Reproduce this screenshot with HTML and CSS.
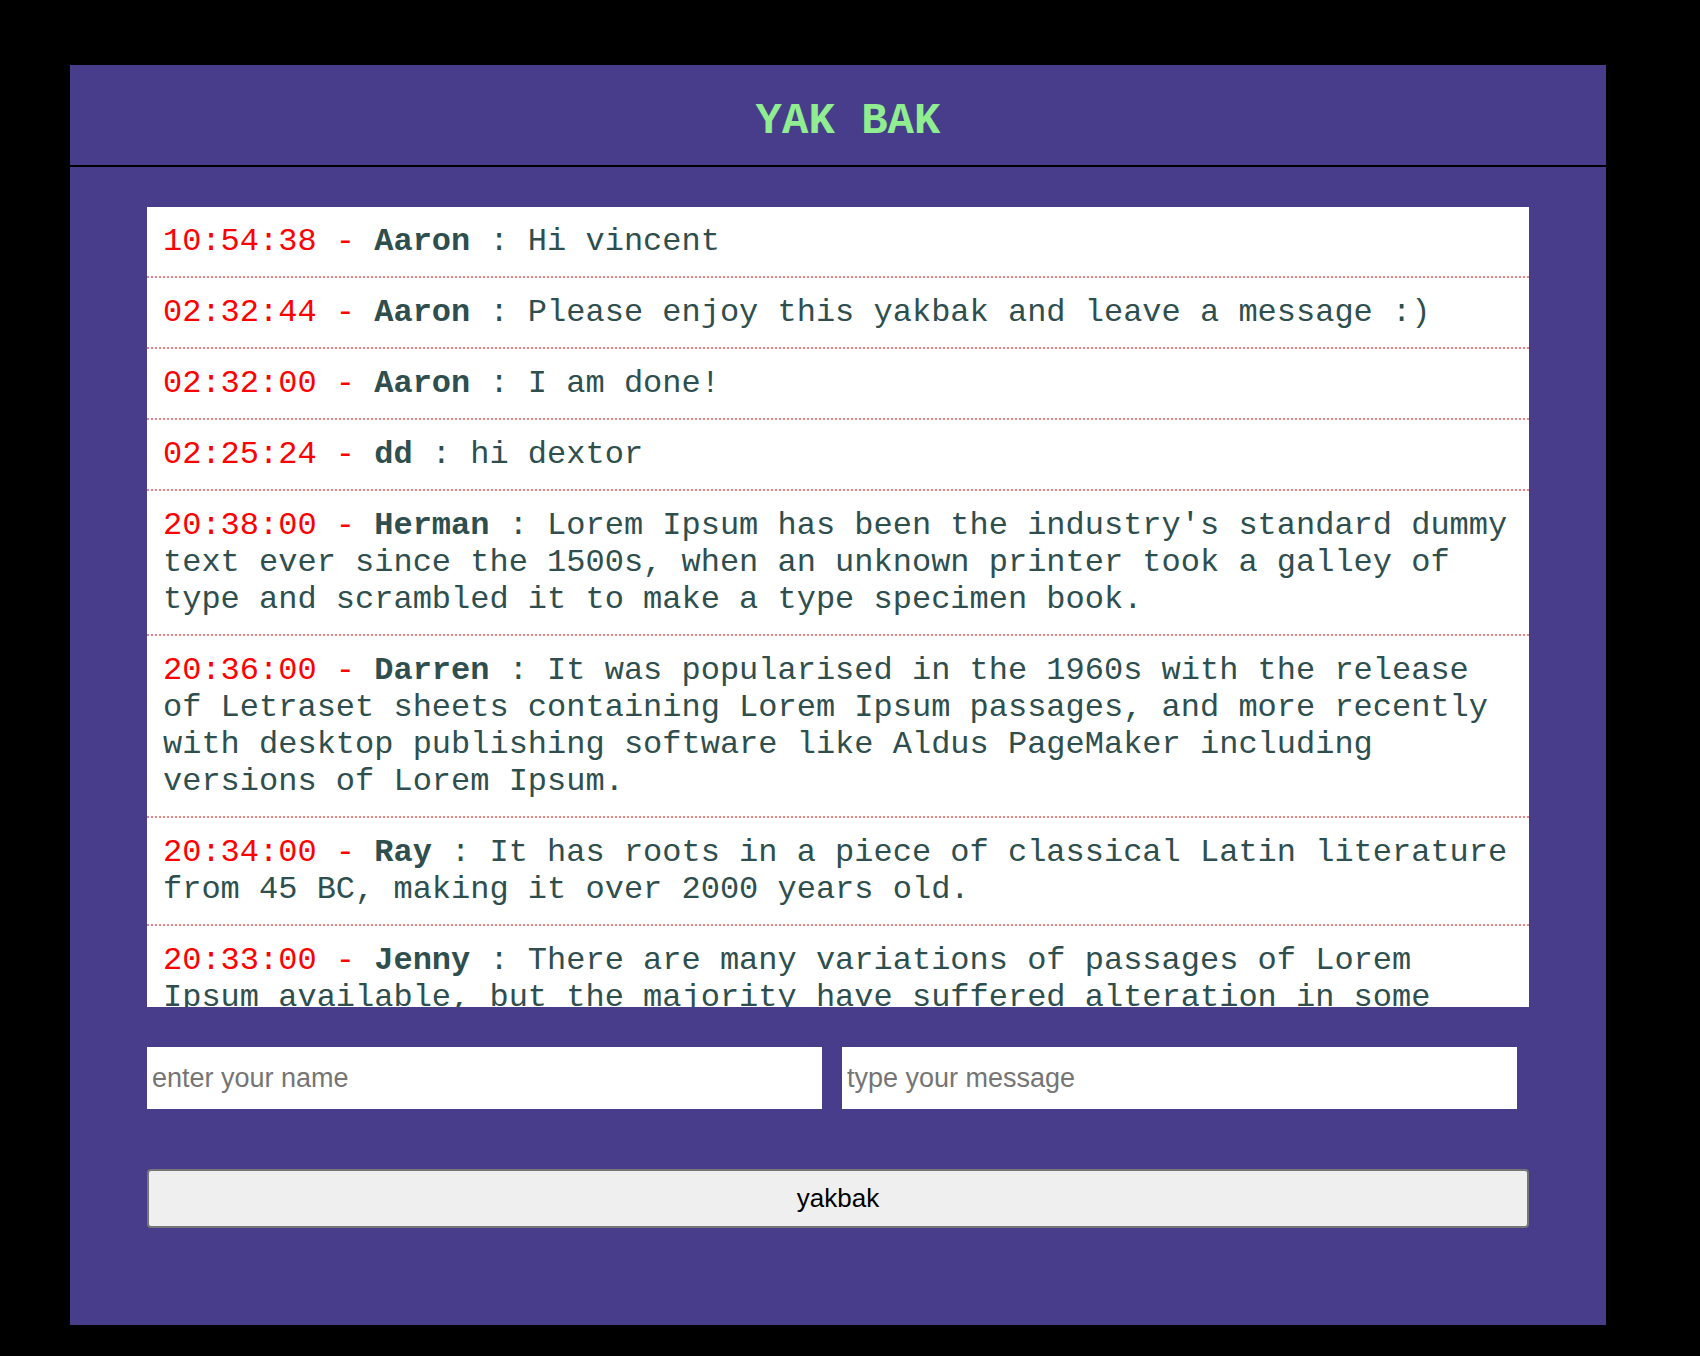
FILE: index.html
```html
<!DOCTYPE html>
<html lang="en">
<head>
<meta charset="utf-8">
<title>Yak Bak</title>
<link rel="stylesheet" href="styles.css">
</head>
<body>
<div class="app">
  <header class="header">
    <h1 class="title">YAK BAK</h1>
  </header>
  <main class="main">
    <ul class="messages">
      <li class="msg"><span class="time">10:54:38 - </span><b class="name">Aaron</b> : Hi vincent</li>
      <li class="msg"><span class="time">02:32:44 - </span><b class="name">Aaron</b> : Please enjoy this yakbak and leave a message :)</li>
      <li class="msg"><span class="time">02:32:00 - </span><b class="name">Aaron</b> : I am done!</li>
      <li class="msg"><span class="time">02:25:24 - </span><b class="name">dd</b> : hi dextor</li>
      <li class="msg"><span class="time">20:38:00 - </span><b class="name">Herman</b> : Lorem Ipsum has been the industry's standard dummy text ever since the 1500s, when an unknown printer took a galley of type and scrambled it to make a type specimen book.</li>
      <li class="msg"><span class="time">20:36:00 - </span><b class="name">Darren</b> : It was popularised in the 1960s with the release of Letraset sheets containing Lorem Ipsum passages, and more recently with desktop publishing software like Aldus PageMaker including versions of Lorem Ipsum.</li>
      <li class="msg"><span class="time">20:34:00 - </span><b class="name">Ray</b> : It has roots in a piece of classical Latin literature from 45 BC, making it over 2000 years old.</li>
      <li class="msg"><span class="time">20:33:00 - </span><b class="name">Jenny</b> : There are many variations of passages of Lorem Ipsum available, but the majority have suffered alteration in some form, by injected humour, or randomised words which don't look even slightly believable.</li>
    </ul>
    <form class="composer">
      <div class="fields">
        <input class="field" type="text" placeholder="enter your name">
        <input class="field" type="text" placeholder="type your message">
      </div>
      <button class="send" type="button">yakbak</button>
    </form>
  </main>
</div>
</body>
</html>
```
FILE: styles.css
```css
html, body {
  margin: 0;
  padding: 0;
  background: #000000;
}

body {
  padding: 65px 0 31px 70px;
}

.app {
  width: 1536px;
  height: 1260px;
  background: #483d8b;
  box-sizing: border-box;
}

.header {
  height: 102px;
  box-sizing: border-box;
  border-bottom: 2px solid #000000;
  padding: 12px 0 0 20px;
  display: flex;
  align-items: center;
  justify-content: center;
}

.title {
  margin: 0;
  font-family: "Liberation Mono", "Courier New", monospace;
  font-size: 44px;
  font-weight: bold;
  color: #90ee90;
}

.main {
  padding: 40px 77px 0 77px;
}

.messages {
  list-style: none;
  margin: 0;
  padding: 0;
  height: 800px;
  overflow: hidden;
  background: #ffffff;
}

.msg {
  padding: 16px;
  border-bottom: 2px dotted #f08080;
  font-family: "Liberation Mono", "Courier New", monospace;
  font-size: 32px;
  line-height: 37px;
  color: #2f4f4f;
}

.time {
  color: #ff0000;
}

.name {
  font-weight: bold;
}

.composer {
  margin: 40px 0 0 0;
}

.fields {
  display: flex;
  gap: 20px;
}

.field {
  width: 675px;
  height: 62px;
  box-sizing: border-box;
  border: none;
  outline: none;
  margin: 0;
  padding: 0 5px;
  background: #ffffff;
  font-family: "Liberation Sans", Arial, sans-serif;
  font-size: 27px;
  color: #000000;
}

.field::placeholder {
  color: #757575;
}

.send {
  display: block;
  width: 100%;
  height: 59px;
  margin-top: 60px;
  box-sizing: border-box;
  border: 2px solid #767676;
  border-radius: 4px;
  background: #efefef;
  font-family: "Liberation Sans", Arial, sans-serif;
  font-size: 26px;
  color: #000000;
  padding: 0;
}
```
